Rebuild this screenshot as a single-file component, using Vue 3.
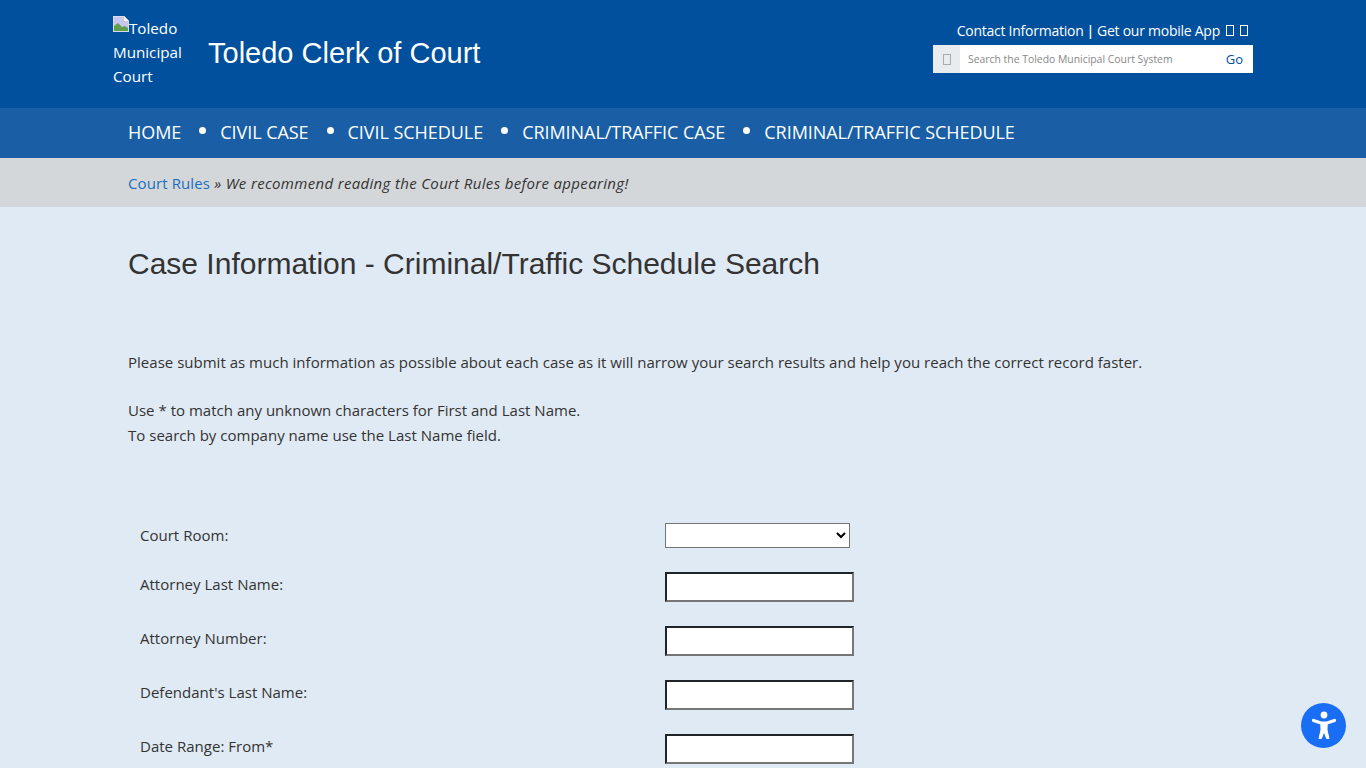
<template>
  <div class="page">
    <header class="top">
      <div class="top-inner">
        <div class="brand">
          <a class="logo">
            <svg class="broken" width="16" height="16" viewBox="0 0 16 16">
              <path d="M0 0h11l5 5v11H0z" fill="#d9dde8" />
              <path d="M1 1h9.5L15 5.5V15H1z" fill="#c9c6ee" />
              <path d="M1 15V10l4-3 4 4 3-1 3 2v3z" fill="#5fa04e" />
              <path d="M11 0v5h5z" fill="#fff" />
            </svg>Toledo Municipal Court
          </a>
          <span class="site-name">Toledo Clerk of Court</span>
        </div>
        <div class="tools">
          <div class="tool-links">
            <span>Contact Information</span>
            <span class="pipe">|</span>
            <span>Get our mobile App</span>
            <i class="tofu"></i>
            <i class="tofu"></i>
          </div>
          <div class="search">
            <span class="search-icon"><i class="tofu grey"></i></span>
            <input class="search-input" type="text" placeholder="Search the Toledo Municipal Court System" />
            <span class="go">Go</span>
          </div>
        </div>
      </div>
    </header>

    <nav class="nav">
      <ul class="nav-list">
        <li v-for="item in navItems" :key="item">{{ item }}</li>
      </ul>
    </nav>

    <div class="notice">
      <div class="notice-inner">
        <a class="rules">Court Rules</a>
        <em> » We recommend reading the Court Rules before appearing!</em>
      </div>
    </div>

    <main class="content">
      <h1>Case Information - Criminal/Traffic Schedule Search</h1>
      <p class="intro">Please submit as much information as possible about each case as it will narrow your search results and help you reach the correct record faster.</p>
      <p class="hints">
        Use * to match any unknown characters for First and Last Name.<br />
        To search by company name use the Last Name field.
      </p>

      <form class="search-form">
        <div class="row select-row">
          <label>Court Room:</label>
          <select class="room"><option></option></select>
        </div>
        <div class="row" v-for="field in fields" :key="field">
          <label>{{ field }}</label>
          <input class="field" type="text" />
        </div>
      </form>
    </main>

    <button class="a11y" aria-label="Accessibility">
      <svg width="30" height="32" viewBox="0 0 30 32">
        <circle cx="15" cy="5" r="3.4" fill="#fff" />
        <path d="M4.5 10.5 L12 13 H18 L25.5 10.5" fill="none" stroke="#fff" stroke-width="3.2" stroke-linecap="round" stroke-linejoin="round" />
        <path d="M11.8 13 H18.2 L18 20 L20 28.5 H17.6 L15 21.5 L12.4 28.5 H10 L12 20z" fill="#fff" stroke="#fff" stroke-width="1" stroke-linejoin="round" />
      </svg>
    </button>
  </div>
</template>

<script setup>
const navItems = ['HOME', 'CIVIL CASE', 'CIVIL SCHEDULE', 'CRIMINAL/TRAFFIC CASE', 'CRIMINAL/TRAFFIC SCHEDULE']

const fields = ['Attorney Last Name:', 'Attorney Number:', "Defendant's Last Name:", 'Date Range: From*']
</script>

<style>
html, body {
  margin: 0;
  background: #e0eaf4;
}
</style>

<style scoped>
.page {
  position: relative;
  height: 768px;
  overflow: hidden;
  font-family: "Open Sans", "Noto Sans", sans-serif;
  font-size: 15px;
  color: #333;
  background: #e0eaf4;
}

.top {
  background: #00509d;
  height: 108px;
}

.top-inner {
  width: 1140px;
  margin: 0 auto;
  display: flex;
  justify-content: space-between;
}

.brand {
  display: flex;
  align-items: center;
  height: 108px;
}

.logo {
  width: 80px;
  color: #fff;
  font-size: 15.2px;
  line-height: 24px;
  margin-top: -5px;
}

.broken {
  vertical-align: 2px;
}

.site-name {
  margin-left: 15px;
  margin-top: -2px;
  font-family: "Liberation Sans", Arial, sans-serif;
  font-size: 29px;
  color: #fff;
}

.tools {
  width: 320px;
  padding-top: 20px;
}

.tool-links {
  display: flex;
  justify-content: flex-end;
  align-items: center;
  gap: 4px;
  height: 20px;
  padding-right: 5px;
  color: #fff;
  font-size: 14px;
  letter-spacing: -0.25px;
}

.pipe {
  margin: 0 -1px;
  font-weight: 600;
}

.tofu {
  display: inline-block;
  width: 6px;
  height: 9px;
  margin-left: 2px;
  border: 1px solid #fff;
}

.tofu.grey {
  margin: 0;
  border-color: #aaa;
}

.search {
  display: flex;
  height: 28px;
  margin-top: 5px;
  background: #fff;
}

.search-icon {
  width: 27px;
  display: flex;
  align-items: center;
  justify-content: center;
  background: #e9ecef;
}

.search-input {
  flex: 1;
  min-width: 0;
  border: 0;
  outline: 0;
  padding: 0 8px;
  font-family: inherit;
  font-size: 10.4px;
}

.search-input::placeholder {
  color: #888;
}

.go {
  width: 33px;
  padding-right: 2px;
  line-height: 29px;
  text-align: center;
  font-size: 13px;
  color: #00509d;
}

.nav {
  background: #1a5fa6;
  height: 50px;
}

.nav-list {
  width: 1110px;
  height: 48px;
  margin: 0 auto;
  padding: 0;
  list-style: none;
  display: flex;
  align-items: center;
  color: #fff;
  font-size: 18px;
  letter-spacing: -0.05px;
}

.nav-list li + li::before {
  content: "";
  display: inline-block;
  width: 7px;
  height: 7px;
  margin: 0 14px 0 18px;
  border-radius: 50%;
  background: #fff;
  vertical-align: 5px;
}

.notice {
  background: #d3d7da;
  height: 49px;
}

.notice-inner {
  width: 1110px;
  margin: 0 auto;
  line-height: 51px;
  letter-spacing: 0.33px;
}

.rules {
  color: #1a6fc0;
  letter-spacing: 0.1px;
}

.content {
  width: 1110px;
  margin: 0 auto;
}

h1 {
  margin: 39px 0 0;
  font-family: "Liberation Sans", Arial, sans-serif;
  font-weight: 400;
  font-size: 30px;
  line-height: 36px;
  color: #333;
}

.intro {
  margin: 68px 0 0;
  line-height: 25px;
  letter-spacing: 0.015px;
}

.hints {
  margin: 23px 0 0;
  line-height: 25px;
  letter-spacing: 0.015px;
}

.search-form {
  margin-top: 75px;
}

.row {
  display: flex;
  height: 54px;
  padding-left: 12px;
  letter-spacing: 0.015px;
}

.select-row {
  height: 49px;
  align-items: flex-start;
}

.row label {
  width: 525px;
  line-height: 24px;
}

.select-row label {
  line-height: 25px;
}

.room {
  width: 185px;
  height: 25px;
  background: #fff;
  border: 1px solid #767676;
  font-family: inherit;
}

.field {
  box-sizing: border-box;
  width: 189px;
  height: 30px;
  background: #fff;
  border: 2px solid #767676;
  border-top-color: #1f2429;
  border-left-color: #1f2429;
  padding: 0;
}

.a11y {
  position: absolute;
  left: 1301px;
  top: 703px;
  width: 45px;
  height: 45px;
  padding: 0;
  border: 0;
  border-radius: 50%;
  background: #1a6ef5;
  display: flex;
  align-items: center;
  justify-content: center;
}
</style>
